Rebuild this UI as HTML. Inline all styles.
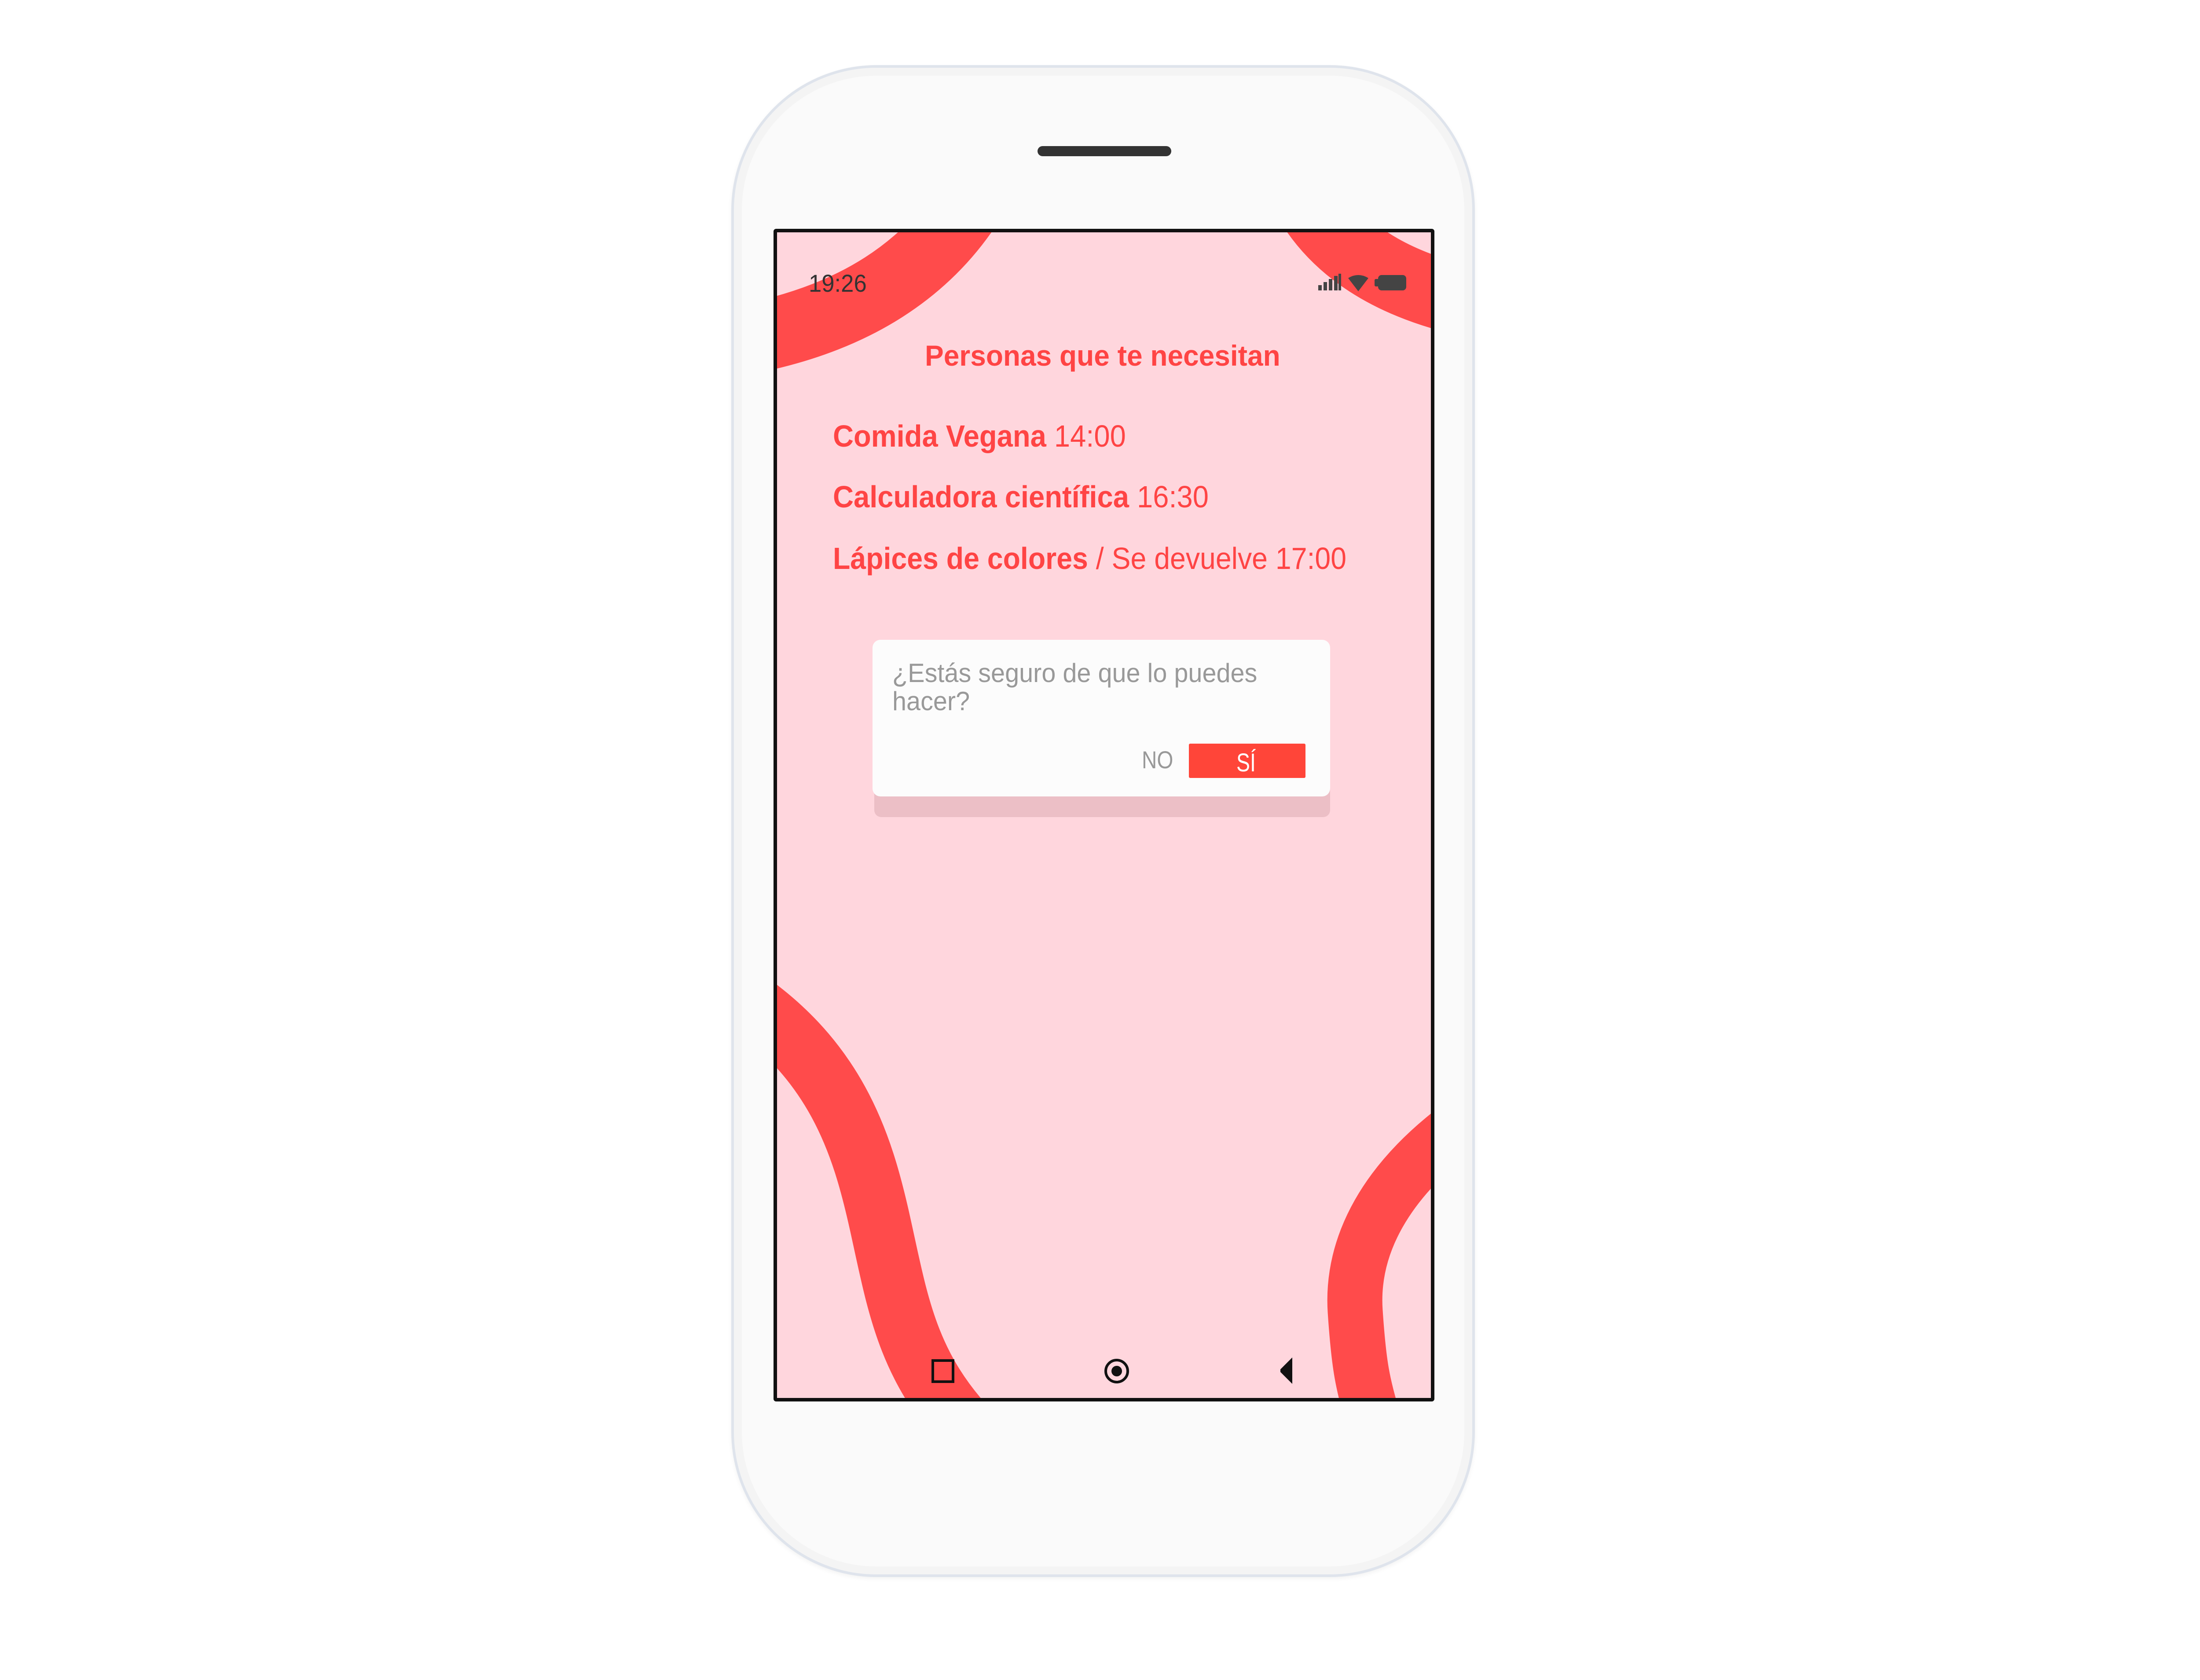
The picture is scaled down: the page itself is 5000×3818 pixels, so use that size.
<!DOCTYPE html>
<html><head><meta charset="utf-8"><style>
html,body{margin:0;padding:0;background:#fff;}
body{width:5000px;height:3818px;position:relative;overflow:hidden;font-family:"Liberation Sans",sans-serif;}
.abs{position:absolute;}
.phone{left:1662px;top:148px;width:1690px;height:3436px;border-radius:330px;background:#fafafa;border:6px solid #dfe4ec;box-sizing:border-box;box-shadow:inset 0 0 0 18px #f4f4f4, 0 4px 10px rgba(0,0,0,0.05);}
.speaker{left:2358px;top:332px;width:304px;height:23px;border-radius:12px;background:#333;}
.screen{left:1758px;top:520px;width:1502px;height:2665px;border:8px solid #111;box-sizing:border-box;background:#ffd6dd;overflow:hidden;border-radius:6px;}
.t{white-space:nowrap;transform-origin:0 0;display:inline-block;}
</style></head><body>
<div class="abs phone"></div>
<div class="abs speaker"></div>
<div class="abs screen">
<svg width="1502" height="2665" viewBox="1758 520 1502 2665" style="position:absolute;left:-8px;top:-8px;">
<g fill="none" stroke="#ff4b4b" stroke-linecap="butt">
<path d="M2215 440 Q2060 700 1700 770" stroke-width="160"/>
<path d="M2960 430 Q3060 630 3360 690" stroke-width="160"/>
<path d="M1660 2250 C1900 2400 1960 2600 2000 2780 S2060 3100 2200 3250" stroke-width="140"/>
<path d="M3330 2550 C3150 2680 3070 2830 3080 2980 S3100 3150 3130 3260" stroke-width="125"/>
</g>
<rect x="2120" y="3092" width="46" height="48" fill="none" stroke="#111" stroke-width="6"/>
<circle cx="2538" cy="3116" r="25" fill="none" stroke="#111" stroke-width="6"/>
<circle cx="2538" cy="3116" r="12" fill="#111"/>
<path d="M2937 3085 L2937 3145 L2910 3118 L2910 3112 Z" fill="#111"/>
<g fill="#444">
<rect x="2996" y="648" width="8" height="12"/><rect x="3008" y="641" width="8" height="19"/><rect x="3020" y="634" width="8" height="26"/><rect x="3032" y="627" width="8" height="33"/><rect x="3042" y="622" width="6" height="38"/>
<path d="M3064 632 Q3087 618 3110 632 L3087 662 Z"/>
<rect x="3132" y="625" width="64" height="35" rx="8"/><rect x="3124" y="634" width="10" height="17" rx="3"/>
</g>
</svg>
</div>
<div class="abs t" style="left:1838px;top:611px;font-size:56px;color:#333;transform:scaleX(0.94);">19:26</div>
<div class="abs t" style="left:2102px;top:770px;font-size:66px;font-weight:bold;color:#ff4444;transform:scaleX(0.97);">Personas que te necesitan</div>
<div class="abs t" style="left:1893px;top:951px;font-size:70px;color:#ff4444;transform:scaleX(0.93);"><b>Comida Vegana</b> 14:00</div>
<div class="abs t" style="left:1893px;top:1089px;font-size:70px;color:#ff4444;transform:scaleX(0.93);"><b>Calculadora científica</b> 16:30</div>
<div class="abs t" style="left:1893px;top:1229px;font-size:70px;color:#ff4444;transform:scaleX(0.92);"><b>Lápices de colores</b> / Se devuelve 17:00</div>
<div class="abs" style="left:1987px;top:1480px;width:1036px;height:377px;border-radius:16px;background:#ecbfc6;"></div>
<div class="abs" style="left:1983px;top:1454px;width:1040px;height:356px;border-radius:18px;background:#fcfcfc;"></div>
<div class="abs t" style="left:2028px;top:1498px;font-size:60px;line-height:64px;color:#999;transform:scaleX(0.96);">¿Estás seguro de que lo puedes<br>hacer?</div>
<div class="abs t" style="left:2595px;top:1694px;font-size:56px;color:#999;transform:scaleX(0.85);">NO</div>
<div class="abs" style="left:2702px;top:1690px;width:265px;height:78px;background:#ff4539;border-radius:3px;"></div>
<div class="abs t" style="left:2810px;top:1700px;font-size:58px;color:#fff;transform:scaleX(0.8);">SÍ</div>
</body></html>
